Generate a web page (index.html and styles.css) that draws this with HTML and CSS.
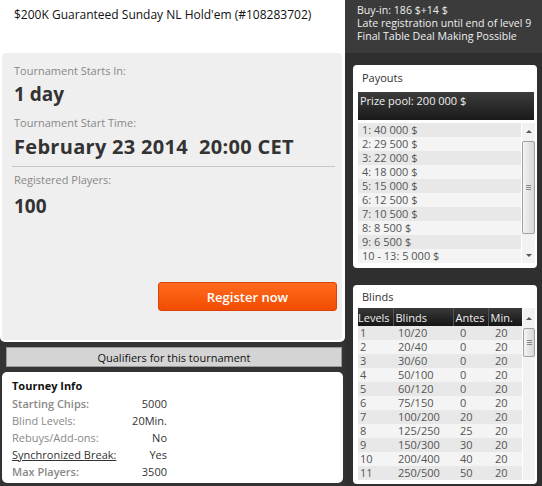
FILE: index.html
```html
<!DOCTYPE html>
<html lang="en">
  <head>
    <meta charset="UTF-8" />
    <title>$200K Guaranteed Sunday NL Hold'em</title>
    <link rel="stylesheet" href="styles.css">
  </head>
  <body>
    <div class="page">
      <div class="main">
        <div class="summary">
          <h1 class="title">$200K Guaranteed Sunday NL Hold'em (#108283702)</h1>
          <div class="start-panel">
            <div class="label">Tournament Starts In:</div>
            <div class="value">1 day</div>
            <div class="label label-gap">Tournament Start Time:</div>
            <div class="value value-date">February 23 2014&nbsp; 20:00 CET</div>
            <hr class="divider" />
            <div class="label">Registered Players:</div>
            <div class="value value-players">100</div>
            <button class="register-button">Register now</button>
          </div>
        </div>

        <button class="qualifiers">Qualifiers for this tournament</button>

        <div class="info">
          <h3 class="info-title">Tourney Info</h3>
          <table class="info-table">
            <tr><td class="info-label strong">Starting Chips:</td><td>5000</td></tr>
            <tr><td class="info-label">Blind Levels:</td><td>20Min.</td></tr>
            <tr><td class="info-label">Rebuys/Add-ons:</td><td>No</td></tr>
            <tr><td class="info-label link">Synchronized Break:</td><td>Yes</td></tr>
            <tr><td class="info-label strong">Max Players:</td><td>3500</td></tr>
          </table>
        </div>
      </div>

      <div class="side">
        <div class="side-head">
          <div class="head-line">Buy-in: 186 $+14 $</div>
          <div class="head-line">Late registration until end of level 9</div>
          <div class="head-line">Final Table Deal Making Possible</div>
        </div>

        <div class="box payouts">
          <div class="box-title">Payouts</div>
          <div class="prize">Prize pool: 200 000 $</div>
          <div class="scroll-area">
            <ul class="payout-list">
              <li>1: 40 000 $</li>
              <li>2: 29 500 $</li>
              <li>3: 22 000 $</li>
              <li>4: 18 000 $</li>
              <li>5: 15 000 $</li>
              <li>6: 12 500 $</li>
              <li>7: 10 500 $</li>
              <li>8: 8 500 $</li>
              <li>9: 6 500 $</li>
              <li>10 - 13: 5 000 $</li>
            </ul>
            <div class="scrollbar">
              <div class="arrow arrow-up"></div>
              <div class="track">
                <div class="thumb thumb-long"><span class="grip"></span></div>
              </div>
              <div class="arrow arrow-down"></div>
            </div>
          </div>
        </div>

        <div class="box blinds">
          <div class="box-title">Blinds</div>
          <div class="scroll-area">
            <table class="blinds-table">
              <colgroup>
                <col class="col-level" />
                <col class="col-blinds" />
                <col class="col-antes" />
                <col class="col-min" />
              </colgroup>
              <thead>
                <tr><th>Levels</th><th>Blinds</th><th>Antes</th><th>Min.</th></tr>
              </thead>
              <tbody>
                <tr><td>1</td><td>10/20</td><td>0</td><td>20</td></tr>
                <tr><td>2</td><td>20/40</td><td>0</td><td>20</td></tr>
                <tr><td>3</td><td>30/60</td><td>0</td><td>20</td></tr>
                <tr><td>4</td><td>50/100</td><td>0</td><td>20</td></tr>
                <tr><td>5</td><td>60/120</td><td>0</td><td>20</td></tr>
                <tr><td>6</td><td>75/150</td><td>0</td><td>20</td></tr>
                <tr><td>7</td><td>100/200</td><td>20</td><td>20</td></tr>
                <tr><td>8</td><td>125/250</td><td>25</td><td>20</td></tr>
                <tr><td>9</td><td>150/300</td><td>30</td><td>20</td></tr>
                <tr><td>10</td><td>200/400</td><td>40</td><td>20</td></tr>
                <tr><td>11</td><td>250/500</td><td>50</td><td>20</td></tr>
              </tbody>
            </table>
            <div class="scrollbar">
              <div class="arrow arrow-up"></div>
              <div class="track">
                <div class="thumb thumb-short"><span class="grip"></span></div>
              </div>
            </div>
          </div>
        </div>
      </div>
    </div>
  </body>
</html>
```

FILE: styles.css
```css
* {
  box-sizing: border-box;
}

body {
  margin: 0;
  font-family: "Open Sans", "DejaVu Sans", sans-serif;
  font-size: 11px;
  background-color: #333;
  overflow: hidden;
}

.page {
  display: grid;
  grid-template-columns: 345px 197px;
  width: 542px;
  height: 486px;
}

/* Left column */
.main {
  display: flex;
  flex-direction: column;
}

.summary {
  background-color: #fff;
  padding: 0 3px 2px 2px;
  border-radius: 0 0 5px 5px;
}

.title {
  height: 53px;
  margin: 0;
  padding: 7px 12px 0;
  font-size: 12px;
  line-height: 16px;
  font-weight: normal;
  color: #111;
}

.start-panel {
  display: flex;
  flex-direction: column;
  height: 287px;
  padding: 11px 5px 0 12px;
  background-color: #efefef;
  border-radius: 4px;
}

.label {
  font-size: 11px;
  line-height: 14px;
  color: #888;
}

.label-gap {
  margin-top: 10px;
}

.value {
  margin-top: 4px;
  font-size: 19px;
  line-height: 24px;
  font-weight: bold;
  color: #333;
}

.value-date {
  margin-top: 5px;
  font-size: 20px;
  letter-spacing: 0.3px;
}

.value-players {
  margin-top: 7px;
}

.divider {
  width: 100%;
  margin: 7px 0 6px -2px;
  border: none;
  border-top: 1px solid #c8c8c8;
}

.register-button {
  align-self: flex-end;
  width: 179px;
  height: 29px;
  margin-top: 64px;
  border: 1px solid #d9440a;
  border-radius: 3px;
  background: linear-gradient(#ff6a1c, #f24d02);
  color: #fff;
  font-family: inherit;
  font-size: 13px;
  font-weight: 600;
  cursor: pointer;
}

.qualifiers {
  height: 20px;
  margin: 5px 3px 0 6px;
  padding: 0;
  border: 1px solid #9a9a9a;
  background-color: #d4d4d4;
  color: #111;
  font-family: inherit;
  font-size: 11px;
}

.info {
  height: 111px;
  margin: 5px 2px 0 2px;
  padding: 7px 10px;
  background-color: #fff;
  border-radius: 5px;
}

.info-title {
  margin: 0 0 2px;
  font-size: 11px;
  line-height: 14px;
  font-weight: bold;
  color: #111;
}

.info-table {
  width: 155px;
  border-collapse: collapse;
}

.info-table td {
  height: 17px;
  padding: 0;
  color: #333;
  text-align: right;
}

.info-table .info-label {
  text-align: left;
  color: #888;
}

.info-table .strong {
  font-weight: 600;
}

.info-table .link {
  color: #333;
  text-decoration: underline;
}

/* Right column */
.side {
  background-color: #2f2f2f;
}

.side-head {
  height: 53px;
  padding: 4px 0 0 12px;
  background-color: #3b3b3b;
  color: #eee;
}

.head-line {
  height: 13px;
  font-size: 10.6px;
  line-height: 13px;
  white-space: nowrap;
}

.box {
  margin: 0 5px 0 8px;
  padding: 0 2px 0 5px;
  background-color: #fff;
  border-radius: 4px;
}

.payouts {
  height: 203px;
  margin-top: 12px;
}

.blinds {
  height: 199px;
  margin-top: 17px;
}

.box-title {
  padding: 6px 4px 7px;
  line-height: 14px;
  color: #333;
}

.blinds .box-title {
  padding: 5px 4px 4px;
}

.prize {
  height: 28px;
  margin-right: 1px;
  padding: 2px 2px;
  line-height: 14px;
  background: linear-gradient(#3c3c3c, #1a1a1a);
  color: #eee;
}

.scroll-area {
  display: flex;
}

.payouts .scroll-area {
  margin-top: 3px;
  height: 140px;
}

.payout-list {
  flex: 1;
  margin: 0;
  padding: 0;
  list-style: none;
}

.payout-list li {
  height: 14px;
  padding-left: 4px;
  line-height: 14px;
  color: #555;
}

.payout-list li:nth-child(odd),
.blinds-table tbody tr:nth-child(odd) {
  background-color: #e8e8e8;
}

.payout-list li:nth-child(even),
.blinds-table tbody tr:nth-child(even) {
  background-color: #f4f4f4;
}

.blinds-table {
  width: 164px;
  table-layout: fixed;
  border-collapse: collapse;
}

.col-level { width: 35px; }
.col-blinds { width: 60px; }
.col-antes { width: 35px; }
.col-min { width: 34px; }

.blinds-table th {
  height: 18px;
  padding: 0 1px 0 2px;
  background: linear-gradient(#3a3a3a, #151515);
  border-left: 1px solid #555;
  color: #eee;
  font-weight: normal;
  text-align: left;
  white-space: nowrap;
  overflow: hidden;
}

.blinds-table th:first-child {
  padding-left: 0;
  border-left: none;
}

.blinds-table td {
  height: 14px;
  padding: 0 0 0 2px;
  line-height: 14px;
  color: #555;
}

.blinds-table td:nth-child(2) { padding-left: 5px; }
.blinds-table td:nth-child(3) { padding-left: 7px; }
.blinds-table td:nth-child(4) { padding-left: 7px; }

/* Scrollbar */
.scrollbar {
  display: flex;
  flex-direction: column;
  width: 13px;
  margin-left: 1px;
  background-color: #f2f2f2;
}

.blinds .scrollbar {
  padding-top: 2px;
}

.arrow {
  height: 16px;
  display: flex;
  align-items: center;
  justify-content: center;
}

.arrow::after {
  content: "";
  border-left: 3px solid transparent;
  border-right: 3px solid transparent;
}

.arrow-up::after {
  border-bottom: 3px solid #555;
}

.arrow-down::after {
  border-top: 3px solid #555;
}

.track {
  flex: 1;
  padding-top: 2px;
}

.thumb {
  display: flex;
  align-items: center;
  justify-content: center;
  border: 1px solid #a0a0a0;
  border-radius: 2px;
  background: linear-gradient(to right, #f4f4f4, #d6d6d6);
}

.thumb-long {
  height: 93px;
}

.thumb-short {
  height: 29px;
}

.grip {
  width: 5px;
  height: 5px;
  border-top: 1px solid #888;
  border-bottom: 1px solid #888;
  background: linear-gradient(#888, #888) center / 100% 1px no-repeat;
}
```
